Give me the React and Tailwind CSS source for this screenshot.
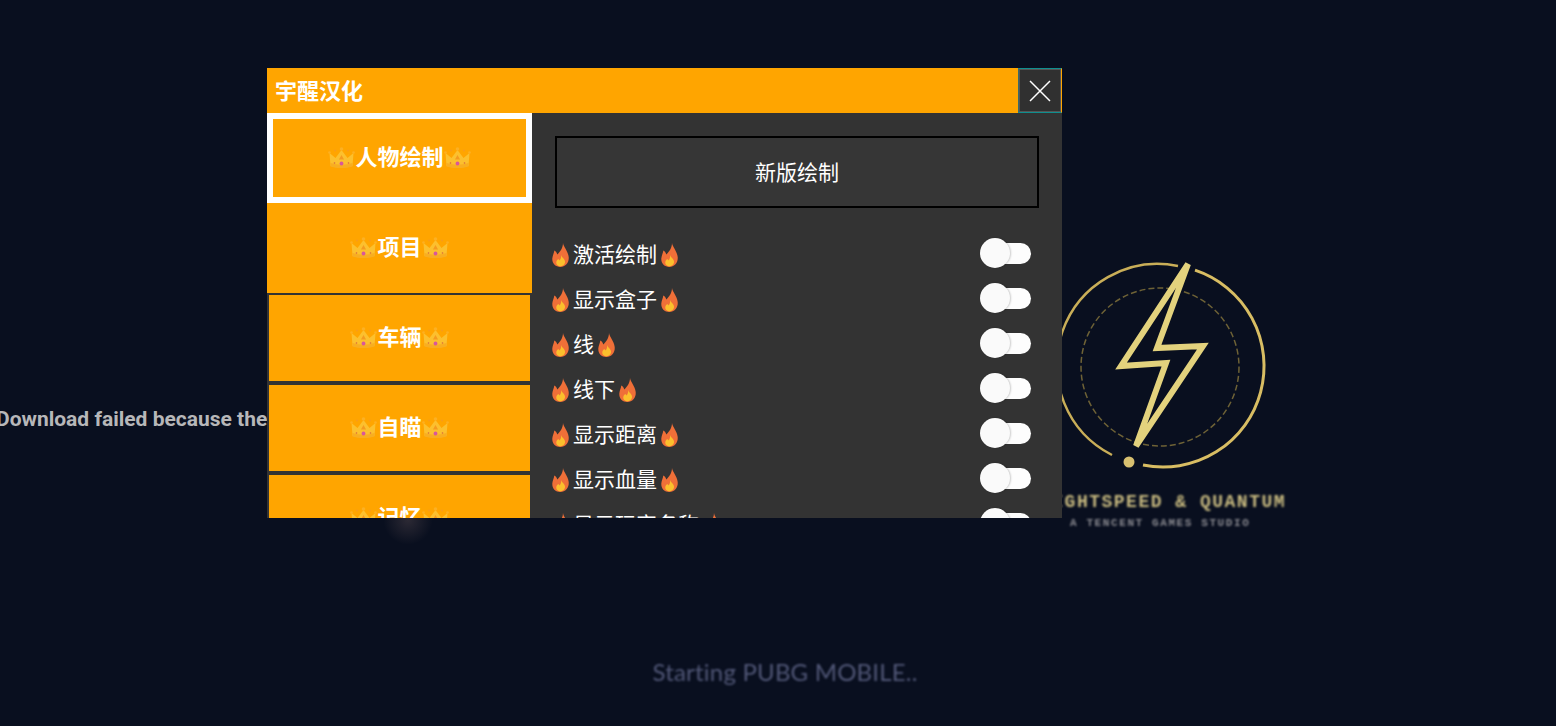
const CJK = "font-['Roboto','Noto_Sans_CJK_SC',sans-serif]";

const TABS = ["项目", "车辆", "自瞄", "记忆"];

const ROWS = ["激活绘制", "显示盒子", "线", "线下", "显示距离", "显示血量", "显示玩家名称"];

function Crown() {
    return (
        <svg width="27" height="22" viewBox="0 0 27 22" className="-mt-[1px] shrink-0 blur-[0.3px]">
            <path d="M1.500 6 L7.500 11 L13.500 3 L19.500 11 L25.500 6 L24.500 19 Q13.500 22.500 2.500 19 Z" fill="#fcc02e" />
            <path d="M2.300 16 Q13.500 19.500 24.700 16 L24.500 19.500 Q13.500 22.500 2.500 19.500 Z" fill="#f8ae22" />
            <circle cx="1.500" cy="5.500" r="1.300" fill="#fdb022" />
            <circle cx="13.500" cy="2" r="1.800" fill="#fdb022" />
            <circle cx="25.500" cy="5.500" r="1.300" fill="#fdb022" />
            <circle cx="7" cy="3.500" r="0.900" fill="#f79a20" />
            <circle cx="20" cy="3.500" r="0.900" fill="#f79a20" />
            <circle cx="13.500" cy="16.500" r="1.900" fill="#d8589a" />
            <circle cx="6.500" cy="16" r="0.800" fill="#d9683a" />
            <circle cx="20.500" cy="16" r="0.800" fill="#d9683a" />
            <path d="M13.500 8 L16 12.500 L11 12.500 Z" fill="#f59a1f" />
        </svg>
    );
}

function Flame() {
    return (
        <svg width="21" height="24" viewBox="0 0 21 24" className="shrink-0">
            <path
                d="M13 0 C13.500 4 18 8 18.700 14 C19.300 20 15 24 10.500 24 C5.500 24 2 20.500 2.300 15.500 C2.500 12.500 4 10.500 4.300 7.500 C6 8.500 7 10 7.300 11.500 C10 9 13 5 13 0 Z"
                fill="#ef6f38"
            />
            <path
                d="M11 12 C12 15 15.500 16 15 19.500 C14.500 22 12.500 23.300 10.500 23.300 C8 23.300 6 21.500 6.300 19 C6.500 17.500 7.500 17 8 16 C9 16.500 9.500 17 9.800 17.500 C10.500 16 11.500 14.500 11 12 Z"
                fill="#fbc02d"
            />
        </svg>
    );
}

function Toggle() {
    return (
        <div className="relative h-[30px] w-[51px]">
            <div className="absolute right-0 top-[5px] h-[21px] w-[41px] rounded-full bg-[#fdfdfd]" />
            <div className="absolute left-0 top-0 size-[30px] rounded-full bg-[#fafafa] shadow-[1px_0_2px_rgba(0,0,0,0.2)]" />
        </div>
    );
}

function Tab({ label, variant }) {
    const base = "flex h-[90px] shrink-0 items-center justify-center bg-[#ffa500] text-[22px] font-bold text-white";

    const skin = {
        active: "border-[6px] border-white",
        plain: "",
        boxed: "border-2 border-[#333333]",
    };

    return (
        <div className={`${base} ${skin[variant]}`}>
            <Crown />
            <span className="-mt-[2px]">{label}</span>
            <Crown />
        </div>
    );
}

function Row({ label }) {
    return (
        <div className="flex h-[45px] shrink-0 items-center justify-between pl-[18px] pr-[31px]">
            <div className="flex items-center text-[21px] leading-none text-white">
                <Flame />
                <span className="mx-[2px] mt-[2px]">{label}</span>
                <Flame />
            </div>
            <div className="-mt-[3px]">
                <Toggle />
            </div>
        </div>
    );
}

function Logo() {
    return (
        <div className="absolute left-[1040px] top-[250px] w-[250px]">
            <svg width="250" height="225" viewBox="0 0 250 225" className="blur-[0.7px]">
                <path d="M155 20.200 A101 101 0 0 1 103 215" fill="none" stroke="#d8bd63" strokeWidth="3" />
                <path d="M138 16 A101 101 0 0 0 72 205" fill="none" stroke="#c9ae58" strokeWidth="2.500" />
                <circle cx="120" cy="117" r="79" fill="none" stroke="#6e6236" strokeWidth="1.500" strokeDasharray="6 3" />
                <path
                    d="M148 14 L81 116 L126 113 L96 196 L163 96 L117 98 Z"
                    fill="none"
                    stroke="#e3d27d"
                    strokeWidth="6"
                    strokeLinejoin="miter"
                />
                <circle cx="89" cy="212" r="5.500" fill="#d8c070" />
            </svg>

            <div className="mt-[18px] whitespace-nowrap pr-[5px] text-right font-['Liberation_Mono',monospace] text-[18px] font-bold leading-[18px] tracking-[1.500px] text-[#c9bb80] blur-[0.8px]">
                LIGHTSPEED &amp; QUANTUM
            </div>

            <div className="ml-[30px] mt-[6px] whitespace-nowrap font-['Liberation_Mono',monospace] text-[11px] font-bold leading-[12px] tracking-[1.600px] text-[#8a8a90] blur-[0.8px]">
                A TENCENT GAMES STUDIO
            </div>
        </div>
    );
}

export default function App() {
    return (
        <div className={`relative h-screen w-full overflow-hidden bg-[#090f1f] ${CJK}`}>

            <div className="absolute left-[-4px] top-[407px] whitespace-nowrap text-[21px] font-bold leading-6 text-[#b7b7b9]">
                Download failed because the
            </div>

            <Logo />

            <div className="absolute left-[383px] top-[495px] size-[50px] rounded-full bg-[radial-gradient(circle,rgba(255,200,180,0.14),transparent_70%)]" />

            <div className="absolute inset-x-0 top-[656px] pl-[14px] text-center font-['Lato',sans-serif] text-[24px] leading-8 tracking-[0.2px] text-[#525878] blur-[0.8px]">
                Starting PUBG MOBILE..
            </div>

            {/* floating menu window */}
            <div className="absolute left-[267px] top-[68px] flex h-[450px] w-[795px] flex-col overflow-hidden bg-[#333333]">

                <div className="flex h-[45px] shrink-0 items-center justify-between bg-[#ffa500]">
                    <span className="pl-2 pt-[2px] text-[22px] font-bold text-white">
                        宇醒汉化
                    </span>

                    <div className="h-[45px] w-[44px] border border-[#0f8f8f] border-l-[#3a6a6a] border-r-[#ffa500]">
                        <div className="flex h-full items-center justify-center border border-[#555555] bg-[#303030]">
                            <svg width="22" height="22" viewBox="0 0 22 22">
                                <path d="M1 1 L21 21 M21 1 L1 21" stroke="white" strokeWidth="1.500" />
                            </svg>
                        </div>
                    </div>
                </div>

                <div className="flex min-h-0 flex-1">

                    <div className="flex w-[265px] shrink-0 flex-col overflow-hidden">
                        <Tab label="人物绘制" variant="active" />
                        {TABS.map((label, i) => (
                            <Tab key={label} label={label} variant={i === 0 ? "plain" : "boxed"} />
                        ))}
                    </div>

                    <div className="flex min-w-0 flex-1 flex-col overflow-hidden">
                        <div className="mx-[23px] mt-[23px] flex h-[72px] shrink-0 items-center justify-center border-2 border-black bg-[#363636] pt-[3px] text-[21px] text-white">
                            新版绘制
                        </div>

                        <div className="mt-[24px] flex flex-col">
                            {ROWS.map((label) => (
                                <Row key={label} label={label} />
                            ))}
                        </div>
                    </div>

                </div>

            </div>

        </div>
    );
}
